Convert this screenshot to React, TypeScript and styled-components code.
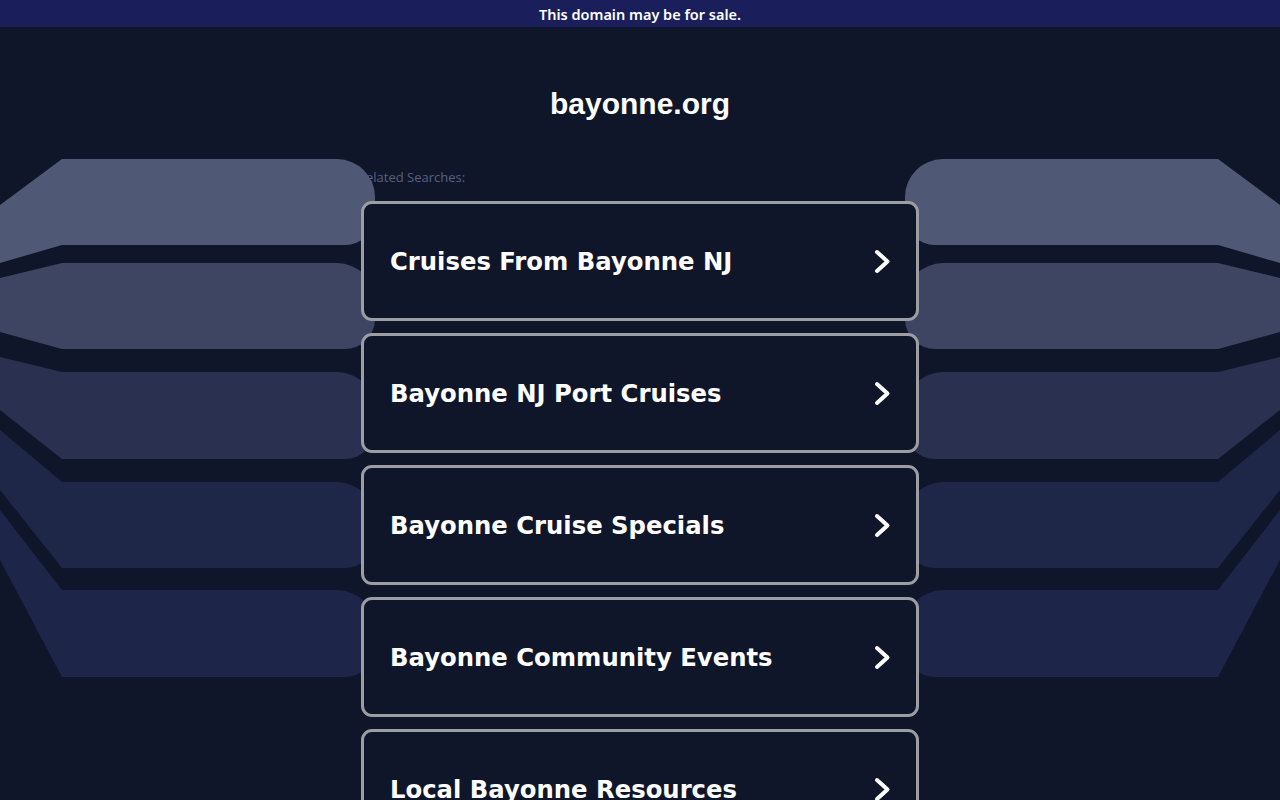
import styled, { createGlobalStyle } from "styled-components";

const GlobalStyle = createGlobalStyle`
    html, body {
        margin: 0;
        padding: 0;
        background: #101629;
    }
    * {
        box-sizing: border-box;
    }
`;

const Page = styled.div`
    position: relative;
    min-height: 100vh;
    overflow: hidden;
    background: #101629;
`;

const SaleBar = styled.div`
    position: relative;
    z-index: 3;
    height: 27px;
    display: flex;
    justify-content: center;
    align-items: center;
    background: #1a1f5b;
    color: #ffffff;
    font-family: "Noto Sans", sans-serif;
    font-weight: 600;
    font-size: 14.5px;
`;

const Wings = styled.svg`
    position: absolute;
    top: 0;
    left: 0;
    z-index: 1;
    pointer-events: none;
`;

const Content = styled.div`
    display: flex;
    flex-direction: column;
    align-items: center;
    padding-top: 59px;
`;

const Title = styled.h1`
    margin: 0;
    font-family: "Liberation Sans", Arial, sans-serif;
    font-weight: bold;
    font-size: 30px;
    line-height: 36px;
    color: #ffffff;
`;

const Column = styled.div`
    width: 558px;
    margin-top: 47px;
    display: flex;
    flex-direction: column;
`;

const RelatedLabel = styled.div`
    position: relative;
    z-index: 0;
    margin-left: -3px;
    font-family: "Open Sans", sans-serif;
    font-size: 13px;
    line-height: 16px;
    color: #586080;
    margin-bottom: 16px;
`;

const List = styled.div`
    position: relative;
    z-index: 2;
    display: flex;
    flex-direction: column;
    gap: 12px;
`;

const Card = styled.a`
    height: 120px;
    display: flex;
    align-items: center;
    justify-content: space-between;
    padding: 1px 25px 0 26px;
    border: 3px solid #9d9ea3;
    border-radius: 11px;
    background: #101629;
    color: #ffffff;
    text-decoration: none;
    font-family: "DejaVu Sans", Verdana, sans-serif;
    font-weight: bold;
    font-size: 24.3px;
`;

const Chevron = () => (
    <svg width="17" height="25" viewBox="0 0 17 25">
        <polyline
            points="3,3 13.5,12.5 3,22"
            fill="none"
            stroke="#ffffff"
            strokeWidth="4"
            strokeLinecap="round"
            strokeLinejoin="round"
        />
    </svg>
);

type Band = { top: number; bottom: number; lt: number; lb: number; color: string };

const bands: Band[] = [
    { top: 159, bottom: 245, lt: 205, lb: 263, color: "#4f5874" },
    { top: 263, bottom: 349, lt: 278, lb: 332, color: "#3d4563" },
    { top: 372, bottom: 459, lt: 357, lb: 410, color: "#2a3150" },
    { top: 482, bottom: 568, lt: 430, lb: 490, color: "#1f2749" },
    { top: 590, bottom: 677, lt: 510, lb: 560, color: "#1d2548" },
];

const bandPath = (b: Band) => {
    const r1 = 38;
    const r2 = 30;
    return [
        `M 0 ${b.lt}`,
        `L 62 ${b.top}`,
        `L ${375 - r1} ${b.top}`,
        `A ${r1} ${r1} 0 0 1 375 ${b.top + r1}`,
        `L 375 ${b.bottom - r2}`,
        `A ${r2} ${r2} 0 0 1 ${375 - r2} ${b.bottom}`,
        `L 62 ${b.bottom}`,
        `L 0 ${b.lb}`,
        "Z",
    ].join(" ");
};

const searches = [
    "Cruises From Bayonne NJ",
    "Bayonne NJ Port Cruises",
    "Bayonne Cruise Specials",
    "Bayonne Community Events",
    "Local Bayonne Resources",
];

export default function App() {
    return (
        <Page>
            <GlobalStyle />
            <SaleBar>This domain may be for sale.</SaleBar>
            <Wings width="1280" height="800" viewBox="0 0 1280 800">
                {bands.map((b, i) => (
                    <g key={i} fill={b.color}>
                        <path d={bandPath(b)} />
                        <path d={bandPath(b)} transform="translate(1280 0) scale(-1 1)" />
                    </g>
                ))}
            </Wings>
            <Content>
                <Title>bayonne.org</Title>
                <Column>
                    <RelatedLabel>Related Searches:</RelatedLabel>
                    <List>
                        {searches.map((s) => (
                            <Card key={s} href="#">
                                <span>{s}</span>
                                <Chevron />
                            </Card>
                        ))}
                    </List>
                </Column>
            </Content>
        </Page>
    );
}
